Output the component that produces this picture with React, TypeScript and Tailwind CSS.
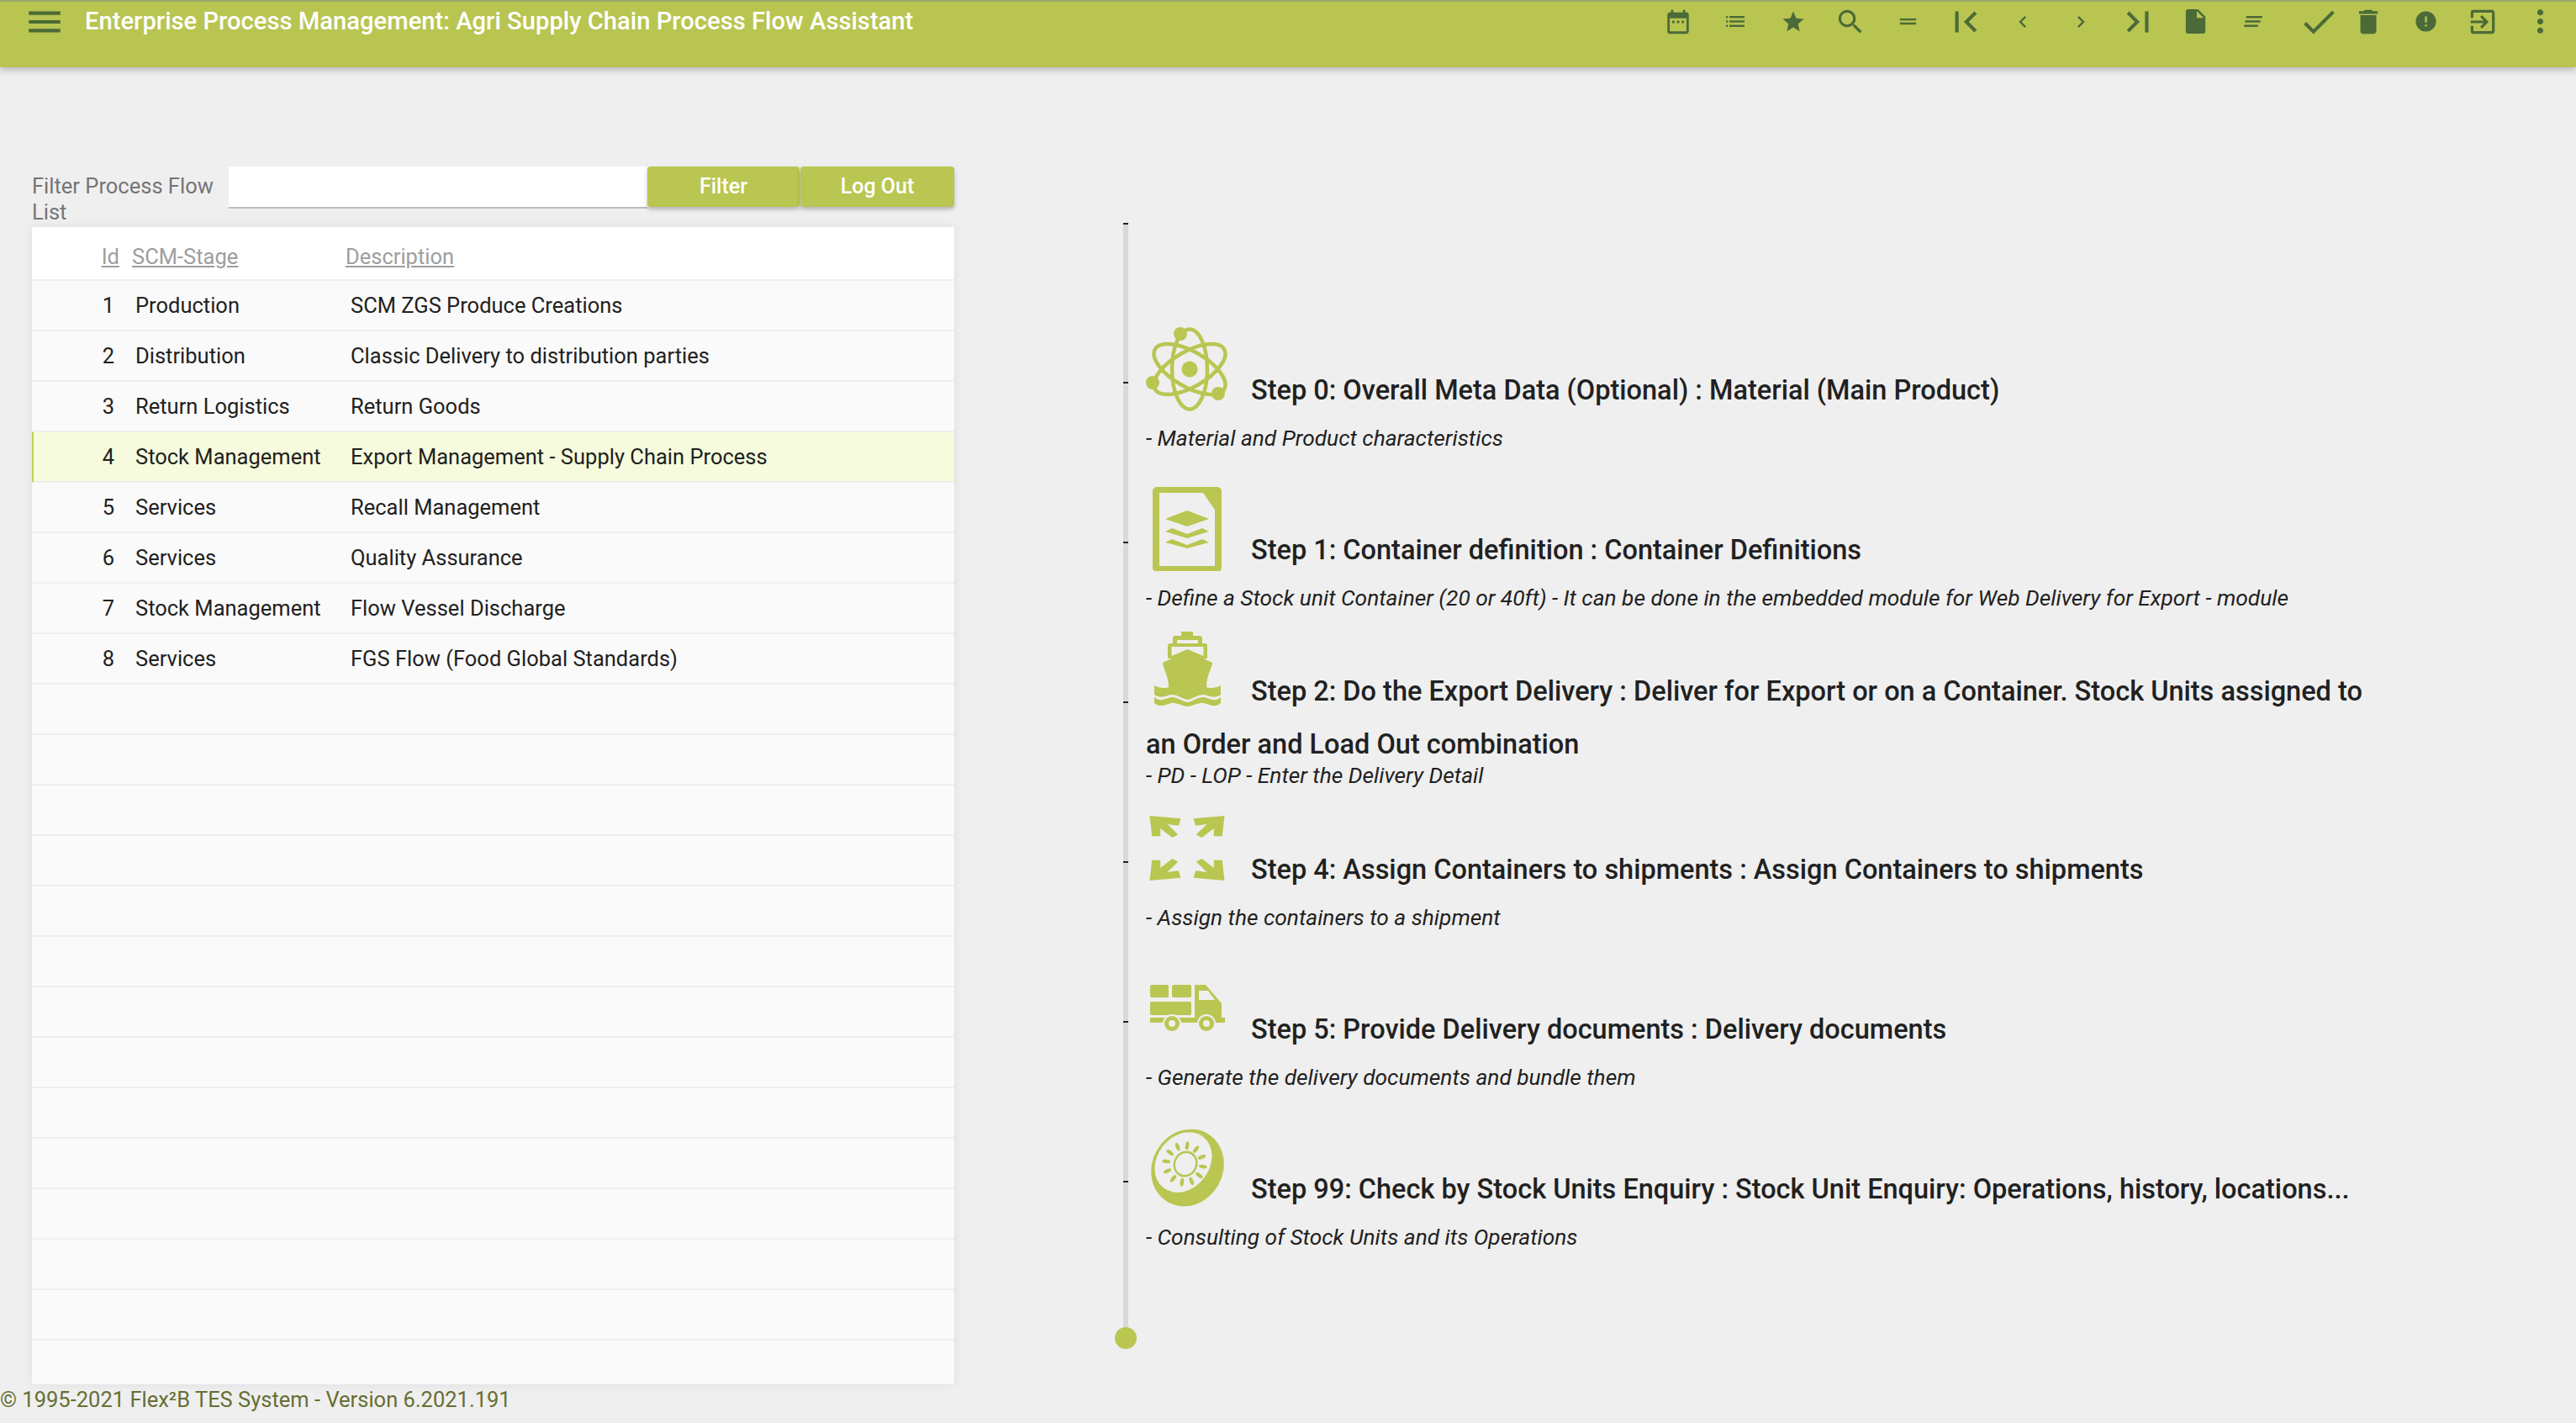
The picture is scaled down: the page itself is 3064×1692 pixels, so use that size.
import React from 'react';
import {
  MdMenu, MdDateRange, MdStar, MdSearch, MdDragHandle, MdFirstPage, MdChevronLeft, MdChevronRight,
  MdLastPage, MdInsertDriveFile, MdCheck, MdDelete, MdError, MdExitToApp, MdMoreVert,
} from 'react-icons/md';

const GREEN = '#b9c651';
const BG = '#efefef';

const ListIcon = () => (
  <svg width="22" height="13" viewBox="0 0 22 13" fill="currentColor">
    <rect x="0" y="0" width="2.2" height="2.4" />
    <rect x="0" y="5.3" width="2.2" height="2.4" />
    <rect x="0" y="10.6" width="2.2" height="2.4" />
    <rect x="4" y="0" width="18" height="2.4" />
    <rect x="4" y="5.3" width="18" height="2.4" />
    <rect x="4" y="10.6" width="18" height="2.4" />
  </svg>
);

const ShortTextIcon = () => (
  <svg width="22" height="13" viewBox="0 0 22 13" fill="currentColor">
    <path d="M3 0h19l-.6 2.6H2.4zM1.6 5.2H20l-.6 2.6H1zM.6 10.4H17l-.6 2.6H0z" />
  </svg>
);

const toolbar: React.ReactNode[] = [
  <MdDateRange size={34} />,
  <ListIcon />,
  <MdStar size={30} />,
  <MdSearch size={38} />,
  <MdDragHandle size={29} />,
  <MdFirstPage size={50} />,
  <MdChevronLeft size={28} />,
  <MdChevronRight size={28} />,
  <MdLastPage size={50} />,
  <MdInsertDriveFile size={35} />,
  <ShortTextIcon />,
  <MdCheck size={50} className="shrink-0 translate-x-[10px]" />,
  <MdDelete size={38} />,
  <MdError size={29} />,
  <MdExitToApp size={38} />,
  <MdMoreVert size={43} />,
];

const rows = [
  { id: 1, stage: 'Production', text: 'SCM ZGS Produce Creations' },
  { id: 2, stage: 'Distribution', text: 'Classic Delivery to distribution parties' },
  { id: 3, stage: 'Return Logistics', text: 'Return Goods' },
  { id: 4, stage: 'Stock Management', text: 'Export Management - Supply Chain Process', selected: true },
  { id: 5, stage: 'Services', text: 'Recall Management' },
  { id: 6, stage: 'Services', text: 'Quality Assurance' },
  { id: 7, stage: 'Stock Management', text: 'Flow Vessel Discharge' },
  { id: 8, stage: 'Services', text: 'FGS Flow (Food Global Standards)' },
];
const emptyRows = Array.from({ length: 14 }, (_, i) => i);

const StepIcon = ({ children }: { children: React.ReactNode }) => (
  <svg
    width="100"
    height="100"
    viewBox="0 0 100 100"
    fill={GREEN}
    className="inline-block align-[-31px] mb-[17px] mr-[25px]"
  >
    {children}
  </svg>
);

const AtomIcon = () => (
  <StepIcon>
    <g fill="none" stroke={GREEN} strokeWidth="4.5">
      <ellipse cx="52" cy="50" rx="21" ry="47.500" />
      <ellipse cx="52" cy="50" rx="21" ry="47.500" transform="rotate(60 52 50)" />
      <ellipse cx="52" cy="50" rx="21" ry="47.500" transform="rotate(-60 52 50)" />
    </g>
    <circle cx="52" cy="50" r="9.500" />
    <circle cx="41" cy="8" r="8" />
    <circle cx="8" cy="66" r="8" />
    <circle cx="86" cy="79" r="8" />
  </StepIcon>
);

const DocIcon = () => (
  <StepIcon>
    <g transform="translate(8 0)">
      <path
        fillRule="evenodd"
        d="M5 0h72a5 5 0 0 1 5 5v91a5 5 0 0 1-5 5H5a5 5 0 0 1-5-5V5a5 5 0 0 1 5-5zM8 7v87h66V27L60 7z"
      />
      <path d="M41 28L67 38 41 47 15 38z" />
      <path d="M15 53l8-4 18 7 18-7 8 4-26 8z" />
      <path d="M15 66l8-4 18 7 18-7 8 4-26 7z" />
    </g>
  </StepIcon>
);

const ShipIcon = () => (
  <StepIcon>
    <g transform="translate(10 4)">
      <path d="M32 0h14v6H32z" />
      <path fillRule="evenodd" d="M25 5h29a3 3 0 0 1 3 3v8H22V8a3 3 0 0 1 3-3zM27 10v4h25v-4z" />
      <path fillRule="evenodd" d="M19 14h41a3 3 0 0 1 3 3v15H16V17a3 3 0 0 1 3-3zM20.500 18v11L39.500 21 58.500 29V18z" />
      <path d="M39.500 23L69 37C69 43 62 52 62 66C66 68 74 67 79 64V75C72 80 66 77 60 75C52 74 46 80 39.500 81C33 80 27 74 19 75C13 77 7 80 0 75V64C5 67 13 68 17 66C17 52 10 43 10 37Z" />
      <path d="M0 78C7 84 13 80 19 78C27 77 33 83 39.500 84C46 83 52 77 60 78C66 80 72 84 79 78V85C72 91 66 87 59 85C52 84 46 89 39.500 89C33 89 27 84 20 85C13 87 7 91 0 85Z" />
    </g>
  </StepIcon>
);

const ArrowsIcon = () => {
  const arrow = 'M0 0L37 3.300 34.400 11.700 21 10 33.700 22.300 27 26 12.700 15 12.700 24.300 2.700 24.300z';
  return (
    <StepIcon>
      <g transform="translate(4.500 11)">
        <path d={arrow} />
        <path d={arrow} transform="matrix(-1 0 0 1 89 0)" />
        <path d={arrow} transform="matrix(1 0 0 -1 0 77)" />
        <path d={arrow} transform="matrix(-1 0 0 -1 89 77)" />
      </g>
    </StepIcon>
  );
};

const TruckIcon = () => (
  <StepIcon>
    <g transform="translate(5 22)">
      <rect x="0" y="0" width="22" height="15" rx="2" />
      <rect x="26" y="0" width="23" height="15" rx="2" />
      <rect x="0" y="20" width="49" height="16" rx="2" />
      <path fillRule="evenodd" d="M53 0h13l19 22v17h4v6H0v-6h53zM58 7v11h19l-8-11z" />
      <circle cx="26" cy="46" r="11" fill={BG} />
      <circle cx="26" cy="46" r="9" />
      <circle cx="26" cy="46" r="4" fill={BG} />
      <circle cx="67" cy="46" r="11" fill={BG} />
      <circle cx="67" cy="46" r="9" />
      <circle cx="67" cy="46" r="4" fill={BG} />
    </g>
  </StepIcon>
);

const KiwiIcon = () => (
  <StepIcon>
    <g transform="translate(5 5)">
      <ellipse cx="44.500" cy="44.500" rx="42" ry="47" transform="rotate(30 44.500 44.500)" />
      <ellipse cx="39.500" cy="38" rx="31" ry="38.500" transform="rotate(38 39.500 38)" fill={BG} />
      <ellipse cx="42" cy="40" rx="13" ry="14.500" transform="rotate(24 42 40)" fill="none" stroke={GREEN} strokeWidth="2.500" />
      {Array.from({ length: 12 }, (_, i) => i * 30 + 8).map((deg) => (
        <ellipse key={deg} cx="41" cy="18" rx="2.200" ry="5" transform={`rotate(${deg} 41 40)`} />
      ))}
    </g>
  </StepIcon>
);

const steps = [
  { icon: <AtomIcon />, title: 'Step 0: Overall Meta Data (Optional) : Material (Main Product)', text: '- Material and Product characteristics' },
  { icon: <DocIcon />, title: 'Step 1: Container definition : Container Definitions', text: '- Define a Stock unit Container (20 or 40ft) - It can be done in the embedded module for Web Delivery for Export - module' },
  { icon: <ShipIcon />, title: 'Step 2: Do the Export Delivery : Deliver for Export or on a Container. Stock Units assigned to an Order and Load Out combination', text: '- PD - LOP - Enter the Delivery Detail' },
  { icon: <ArrowsIcon />, title: 'Step 4: Assign Containers to shipments : Assign Containers to shipments', text: '- Assign the containers to a shipment' },
  { icon: <TruckIcon />, title: 'Step 5: Provide Delivery documents : Delivery documents', text: '- Generate the delivery documents and bundle them' },
  { icon: <KiwiIcon />, title: 'Step 99: Check by Stock Units Enquiry : Stock Unit Enquiry: Operations, history, locations...', text: '- Consulting of Stock Units and its Operations' },
];

export default function App() {
  return (
    <div className="flex h-[1692px] w-[3064px] flex-col overflow-hidden bg-[#efefef] font-['Roboto',sans-serif] [font-kerning:normal] [text-rendering:optimizeLegibility]">
      {/* Toolbar */}
      <header className="z-10 h-[80px] shrink-0 border-t-2 border-[#9aa56e] bg-[#b8c551] shadow-[0_3px_8px_rgba(0,0,0,0.25)]">
        <div className="flex h-[47px] items-center justify-between pr-[8px] text-[#4b6a37]">
          <div className="flex items-center">
            <MdMenu size={50} className="ml-[28px]" />
            <h1 className="ml-[23px] pt-[1px] text-[29.2px] font-medium text-white">
              Enterprise Process Management: Agri Supply Chain Process Flow Assistant
            </h1>
          </div>
          <div className="flex items-center">
            {toolbar.map((icon, i) => (
              <span key={i} className="flex h-[47px] w-[68.4px] items-center justify-center">
                {icon}
              </span>
            ))}
          </div>
        </div>
      </header>

      <main className="flex min-h-0 flex-1">
        {/* Process flow list */}
        <section className="ml-[38px] w-[1097px] shrink-0 pt-[118px]">
          <div className="flex h-[72px] items-start">
            <label className="w-[234px] pt-[8px] text-[25.5px] leading-[31px] text-[#757575]">
              Filter Process Flow List
            </label>
            <input className="h-[50px] w-[498px] border-b-2 border-[#bdbdbd] bg-white outline-none" />
            <button className="h-[48px] w-[181px] rounded-[4px] bg-[#b9c651] text-[25px] font-medium text-white shadow-[0_3px_5px_rgba(0,0,0,0.25)]">
              Filter
            </button>
            <button className="ml-[1px] h-[48px] w-[183px] rounded-[4px] bg-[#b9c651] text-[25px] font-medium text-white shadow-[0_3px_5px_rgba(0,0,0,0.25)]">
              Log Out
            </button>
          </div>
          <div className="h-[1376px] overflow-hidden bg-[#fafafa] shadow-[0_0_12px_rgba(0,0,0,0.07)]">
            <table className="w-full table-fixed border-separate border-spacing-0 text-[25.5px] text-[#212121]">
              <colgroup>
                <col className="w-[108px]" />
                <col className="w-[254px]" />
                <col />
              </colgroup>
              <thead>
                <tr className="h-[64px] bg-white text-left font-normal text-[#9e9e9e]">
                  <th className="border-b-2 border-[#eeeeee] pr-[4px] pt-[9px] text-right font-normal underline">Id</th>
                  <th className="border-b-2 border-[#eeeeee] pl-[11px] pt-[9px] font-normal underline">SCM-Stage</th>
                  <th className="border-b-2 border-[#eeeeee] pl-[11px] pt-[9px] font-normal underline">Description</th>
                </tr>
              </thead>
              <tbody>
                {rows.map((row) => (
                  <tr key={row.id} className={row.selected ? 'h-[60px] bg-[#f5fbdc]' : 'h-[60px]'}>
                    <td
                      className={
                        row.selected
                          ? 'border-b-2 border-l-2 border-[#eeeeee] border-l-[#c3d050] pr-[10px] pt-[1px] text-right'
                          : 'border-b-2 border-[#eeeeee] pr-[10px] pt-[1px] text-right'
                      }
                    >
                      {row.id}
                    </td>
                    <td className="border-b-2 border-[#eeeeee] pl-[15px] pt-[1px]">{row.stage}</td>
                    <td className="border-b-2 border-[#eeeeee] pl-[17px] pt-[1px]">{row.text}</td>
                  </tr>
                ))}
                {emptyRows.map((i) => (
                  <tr key={i} className="h-[60px]">
                    <td className="border-b-2 border-[#eeeeee]" colSpan={3}></td>
                  </tr>
                ))}
              </tbody>
            </table>
          </div>
        </section>

        {/* Process flow timeline */}
        <section className="relative ml-[201px] flex-1 pl-[27px] pt-[288px]">
          <div className="absolute left-0 top-[185px] h-[1313px] w-[6px] bg-[#d9d9d9]">
            <div className="h-[2px] w-full bg-[#222222]"></div>
          </div>
          <div className="absolute left-[-10px] top-[1498px] h-[26px] w-[26px] rounded-full bg-[#b9c651]"></div>
          {steps.map((step, i) => (
            <div key={i} className="relative flex h-[190px] w-[1470px] flex-col justify-center">
              <div className="absolute left-[-27px] top-[86px] h-[2px] w-[6px] bg-[#222222]"></div>
              <h2 className="-mb-[2px] text-[32.5px] font-medium leading-[43px] text-[#212121]">
                {step.icon}
                {step.title}
              </h2>
              <p className="text-[26.3px] italic leading-[34px] text-[#212121]">{step.text}</p>
            </div>
          ))}
        </section>
      </main>

      <footer className="h-[46px] shrink-0 pt-[2px] text-[25.5px] leading-[32px] text-[#666e33]">
        © 1995-2021 Flex²B TES System - Version 6.2021.191
      </footer>
    </div>
  );
}
